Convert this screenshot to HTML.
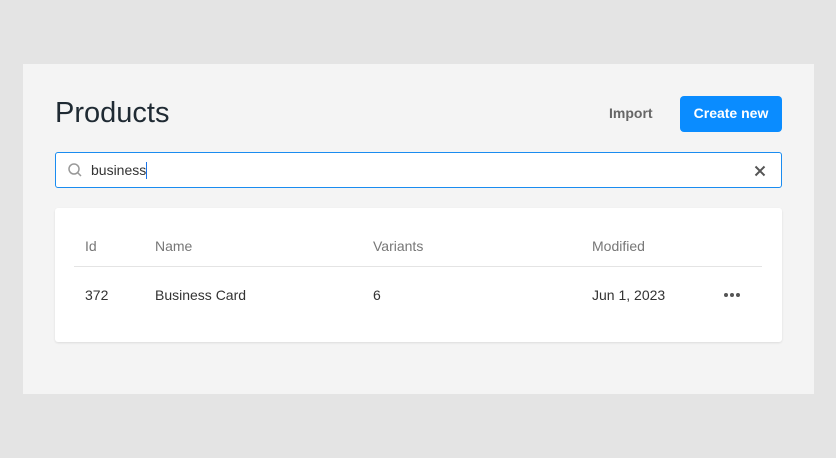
<!DOCTYPE html>
<html><head><style>
*{box-sizing:border-box;margin:0;padding:0}
body{width:836px;height:458px;background:#e4e4e4;font-family:"Liberation Sans",sans-serif;position:relative;overflow:hidden}
.panel{position:absolute;left:23px;top:64px;width:791px;height:330px;background:#f4f4f4}
.abs{position:absolute}
h1{position:absolute;left:55px;top:97px;font-size:29px;font-weight:normal;color:#1f2a33;letter-spacing:0}
.imp{left:609px;top:105px;font-size:14px;color:#666;font-weight:bold}
.btn{left:680px;top:96px;width:102px;height:36px;background:#0a8cff;border-radius:4px;color:#fff;font-size:14px;font-weight:bold;text-align:center;line-height:35px}
.search{left:55px;top:152px;width:727px;height:36px;background:#fff;border:1px solid #1a8cf0;border-radius:3px}
.card{left:55px;top:208px;width:727px;height:134px;background:#fff;border-radius:3px;box-shadow:0 1px 2px rgba(0,0,0,.1)}
.t{font-size:14px;color:#333}
.h{font-size:14px;color:#777}
</style></head><body>
<div class="panel"></div>
<h1>Products</h1>
<div class="abs imp">Import</div>
<div class="abs btn">Create new</div>
<div class="abs search">
<svg class="abs" style="left:11px;top:9px" width="16" height="16" viewBox="0 0 16 16"><circle cx="7" cy="7" r="5" fill="none" stroke="#999" stroke-width="1.5"/><path d="M10.5 10.5L14 14" stroke="#999" stroke-width="1.5"/></svg>
<div class="abs t" style="left:35px;top:9px">business<span style="display:inline-block;width:1px;height:17px;background:#1a73e8;vertical-align:-4px"></span></div>
<svg class="abs" style="left:698px;top:12px" width="12" height="12" viewBox="0 0 12 12"><path d="M1.5 1.5L10.5 10.5M10.5 1.5L1.5 10.5" stroke="#555" stroke-width="2"/></svg>
</div>
<div class="abs card">
<div class="abs h" style="left:30px;top:30px">Id</div>
<div class="abs h" style="left:100px;top:30px">Name</div>
<div class="abs h" style="left:318px;top:30px">Variants</div>
<div class="abs h" style="left:537px;top:30px">Modified</div>
<div class="abs" style="left:19px;top:58px;width:688px;height:1px;background:#e4e4e4"></div>
<div class="abs t" style="left:30px;top:79px">372</div>
<div class="abs t" style="left:100px;top:79px">Business Card</div>
<div class="abs t" style="left:318px;top:79px">6</div>
<div class="abs t" style="left:537px;top:79px">Jun 1, 2023</div>
<svg class="abs" style="left:668px;top:84px" width="18" height="6" viewBox="0 0 18 6"><circle cx="3" cy="3" r="2" fill="#555"/><circle cx="9" cy="3" r="2" fill="#555"/><circle cx="15" cy="3" r="2" fill="#555"/></svg>
</div>
</body></html>
